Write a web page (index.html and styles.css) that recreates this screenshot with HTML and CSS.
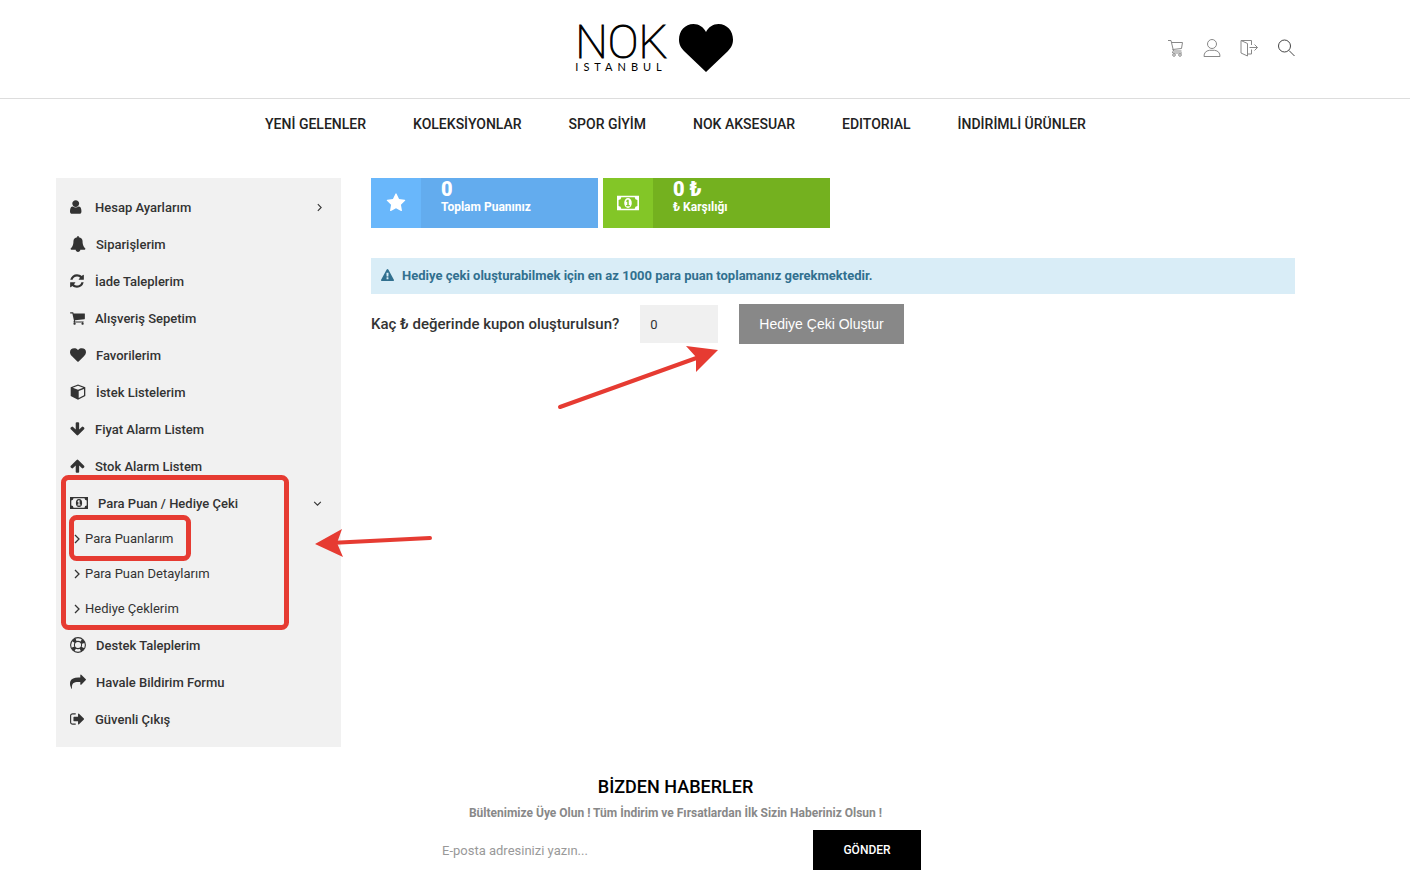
FILE: index.html
```html
<!DOCTYPE html>
<html lang="tr">
  <head>
    <title>Para Puanlarım • NOK İstanbul</title>
    <meta charset="UTF-8">
    <meta name="viewport" content="width=device-width, initial-scale=1.0">

    <!-- Style -->
    <link rel="stylesheet" href="styles.css">
  </head>
  <body>
    <!-- Icon sprite -->
    <svg class="sprite" aria-hidden="true">
      <symbol id="i-user" viewBox="256 0 1680 1792"><path d="M1536 1399q0 109-62.5 187t-150.5 78h-854q-88 0-150.5-78t-62.5-187q0-85 8.5-160.5t31.5-152 58.5-131 94-89 134.5-34.5q131 128 313 128t313-128q76 0 134.500 34.500t94 89 58.500 131 31.500 152 8.500 160.500zm-256-887q0 159-112.500 271.500t-271.500 112.500-271.500-112.500-112.500-271.500 112.500-271.500 271.500-112.500 271.500 112.500 112.500 271.500z"/></symbol>
      <symbol id="i-bell" viewBox="0 0 1792 1792"><path d="M1728 1408q0 52-38 90t-90 38h-448q0 106-75 181t-181 75-181-75-75-181h-448q-52 0-90-38t-38-90q50-42 91-88t85-119.500 74.500-158.500 50-206 19.500-260q0-152 117-282.500t307-158.500q-8-19-8-39 0-40 28-68t68-28 68 28 28 68q0 20-8 39 190 28 307 158.500t117 282.500q0 139 19.500 260t50 206 74.500 158.500 85 119.500 91 88z"/></symbol>
      <symbol id="i-refresh" viewBox="112 0 1680 1792"><path d="M1639 1056q0 5-1 7-64 268-268 434.500t-478 166.500q-146 0-282.500-55t-243.500-157l-129 129q-19 19-45 19t-45-19-19-45v-448q0-26 19-45t45-19h448q26 0 45 19t19 45-19 45l-137 137q71 66 161 102t187 36q134 0 250-65t186-179q11-17 53-117 8-23 30-23h192q13 0 22.500 9.500t9.500 22.500zm25-800v448q0 26-19 45t-45 19h-448q-26 0-45-19t-19-45 19-45l138-138q-148-137-349-137-134 0-250 65t-186 179q-11 17-53 117-8 23-30 23h-199q-13 0-22.500-9.500t-9.500-22.500v-7q65-268 270-434.500t480-166.500q146 0 284 55.500t245 156.500l130-129q19-19 45-19t45 19 19 45z"/></symbol>
      <symbol id="i-cart" viewBox="64 0 1680 1792"><path d="M704 1536q0 52-38 90t-90 38-90-38-38-90 38-90 90-38 90 38 38 90zm896 0q0 52-38 90t-90 38-90-38-38-90 38-90 90-38 90 38 38 90zm128-1088v512q0 24-16.500 42.500t-40.500 21.500l-1044 122q13 60 13 70 0 16-24 64h920q26 0 45 19t19 45-19 45-45 19h-1024q-26 0-45-19t-19-45q0-11 8-31.500t16-36 21.500-40 15.500-29.500l-177-823h-204q-26 0-45-19t-19-45 19-45 45-19h256q16 0 28.500 6.500t19.500 15.500 13 24.500 8 26 5.500 29.500 4.500 26h1201q26 0 45 19t19 45z"/></symbol>
      <symbol id="i-heart" viewBox="0 0 1792 1792"><path d="M896 1664q-26 0-44-18l-624-602q-10-8-27.500-26t-55.500-65.500-68-97.500-53.500-121-23.500-138q0-220 127-344t351-124q62 0 126.500 21.500t120 58 95.500 68.500 76 68q36-36 76-68t95.500-68.500 120-58 126.500-21.500q224 0 351 124t127 344q0 221-229 450l-623 600q-18 18-44 18z"/></symbol>
      <symbol id="i-cube" viewBox="0 0 16 16"><path d="M8 0.500 15.300 3.200V12L8 15.800 0.700 12V3.200z"/><path class="cut" d="M8 1.800 13.300 3.700 8 5.700 2.700 3.700zM8.700 7 14 5v6.300l-5.300 2.800z"/></symbol>
      <symbol id="i-down" viewBox="64 0 1680 1792"><path d="M1675 832q0 53-37 90l-651 652q-39 37-91 37-53 0-90-37l-651-652q-38-36-38-90 0-53 38-91l74-75q39-37 91-37 53 0 90 37l294 294v-704q0-52 38-90t90-38h128q52 0 90 38t38 90v704l294-294q37-37 90-37 52 0 91 37l75 75q37 39 37 91z"/></symbol>
      <symbol id="i-up" viewBox="64 0 1680 1792"><path transform="matrix(1 0 0 -1 0 1792)" d="M1675 832q0 53-37 90l-651 652q-39 37-91 37-53 0-90-37l-651-652q-38-36-38-90 0-53 38-91l74-75q39-37 91-37 53 0 90 37l294 294v-704q0-52 38-90t90-38h128q52 0 90 38t38 90v704l294-294q37-37 90-37 52 0 91 37l75 75q37 39 37 91z"/></symbol>
      <symbol id="i-money" viewBox="0 0 18 16"><path fill-rule="evenodd" d="M0 2h18v12H0zM3.500 3.300a2.300 2.300 0 0 1-2.200 2.200v5a2.300 2.300 0 0 1 2.200 2.200h11a2.300 2.300 0 0 1 2.200-2.200v-5a2.300 2.300 0 0 1-2.200-2.200z"/><ellipse cx="9" cy="8" rx="3.100" ry="4"/><path class="cut" d="M8.400 5.300h1.200v4.300h.9v1H7.500v-1h.9V6.900l-.8.300v-1z"/></symbol>
      <symbol id="i-ring" viewBox="0 0 16 16"><g fill="none" stroke="currentColor"><circle cx="8" cy="8" r="7.400" stroke-width="1.100"/><circle cx="8" cy="8" r="3.600" stroke-width="1.100"/><circle cx="8" cy="8" r="5.500" stroke-width="3.600" stroke-dasharray="3.400 5.240" stroke-dashoffset="-2.620"/></g></symbol>
      <symbol id="i-share" viewBox="0 0 1792 1792"><path d="M1792 640q0 26-19 45l-512 512q-19 19-45 19t-45-19-19-45v-256h-224q-98 0-175.500 6t-154 21.500-133 42.500-105.500 69.500-80 101-48.500 138.500-17.500 181q0 55 5 123 0 6 2.500 23.500t2.500 26.500q0 15-8.500 25t-23.500 10q-16 0-28-17-7-9-13-22t-13.500-30-10.500-24q-127-285-127-451 0-199 53-333 162-403 875-403h224v-256q0-26 19-45t45-19 45 19l512 512q19 19 19 45z"/></symbol>
      <symbol id="i-out" viewBox="60 0 1680 1792"><path d="M704 1440q0 4 1 20t.5 26.500-3 23.500-10 19.500-20.500 6.500h-320q-119 0-203.500-84.500t-84.500-203.500v-704q0-119 84.500-203.500t203.500-84.500h320q13 0 22.500 9.500t9.500 22.500q0 4 1 20t.5 26.500-3 23.500-10 19.500-20.500 6.500h-320q-66 0-113 47t-47 113v704q0 66 47 113t113 47h312l11.500 1 11.500 3 8 5.500 7 9 2 13.500zm928-544q0 26-19 45l-544 544q-19 19-45 19t-45-19-19-45v-288h-448q-26 0-45-19t-19-45v-384q0-26 19-45t45-19h448v-288q0-26 19-45t45-19 45 19l544 544q19 19 19 45z"/></symbol>
      <symbol id="i-star" viewBox="0 0 1792 1792"><path d="M1728 647q0 22-26 48l-363 354 86 500q1 7 1 20 0 21-10.500 35.500t-30.500 14.500q-19 0-40-12l-449-236-449 236q-22 12-40 12-21 0-31.500-14.500t-10.500-35.500q0-6 2-20l86-500-364-354q-25-27-25-48 0-37 56-46l502-73 225-455q19-41 49-41t49 41l225 455 502 73q56 9 56 46z"/></symbol>
      <symbol id="i-warning" viewBox="0 0 1792 1792"><path d="M1024 1375v-190q0-14-9.500-23.500t-22.500-9.500h-192q-13 0-22.500 9.500t-9.500 23.500v190q0 14 9.500 23.500t22.500 9.500h192q13 0 22.500-9.500t9.500-23.500zm-2-374l18-459q0-12-10-19-13-11-24-11h-220q-11 0-24 11-10 7-10 21l17 457q0 10 10 16.500t24 6.500h185q14 0 23.500-6.500t10.500-16.500zm-14-934l768 1408q35 63-2 126-17 29-46.500 46t-63.500 17h-1536q-34 0-63.500-17t-46.500-46q-37-63-2-126l768-1408q17-31 47-49t65-18 65 18 47 49z"/></symbol>
      <symbol id="i-angle" viewBox="0 0 6 10"><path d="M1 1l4 4-4 4" fill="none" stroke="currentColor" stroke-width="1.300"/></symbol>
      <symbol id="i-angle-down" viewBox="0 0 10 6"><path d="M1 1l4 4 4-4" fill="none" stroke="currentColor" stroke-width="1.300"/></symbol>
    </svg>

    <header>
      <a class="logo" href="#">
        <span class="logo-text">
          <span class="logo-name">NOK</span>
          <span class="logo-city">ISTANBUL</span>
        </span>
        <svg class="logo-heart" viewBox="0 0 54 48" aria-hidden="true"><path d="M27 48 5.500 27.500C1.500 23.500 0 20 0 15.500 0 7 6 0 14.500 0 20 0 24.500 3 27 8 29.500 3 34 0 39.500 0 48 0 54 7 54 15.500c0 4.500-1.500 8-5.500 12z"/></svg>
      </a>
      <div class="tools">
        <a href="#" title="Sepet"><svg class="tool" viewBox="0 0 18 18"><path d="M2 1.500h3l2.500 10.500h8M5.500 3.500h11l-1 6-9 1M7.500 12q-1.500.5-.8 2h9.300"/><circle cx="8" cy="16" r="1.300"/><circle cx="14" cy="16" r="1.300"/></svg></a>
        <a href="#" title="Hesabım"><svg class="tool" viewBox="0 0 18 18"><circle cx="9" cy="5" r="4.500"/><path d="M1 17.500q0-5.500 5.500-6.200h5q5.500.7 5.500 6.200z"/></svg></a>
        <a href="#" title="Çıkış"><svg class="tool" viewBox="0 0 18 18"><path d="M1 1.500h10.500V6M11.500 10.500v4.500H8M1 1.500V14l6.500 3V4.500L1 1.500M9.500 8.500h8M14.500 5.500l3 3-3 3"/></svg></a>
        <a href="#" title="Ara"><svg class="tool dark" viewBox="0 0 18 18"><circle cx="7.500" cy="7" r="6"/><path d="M12 11.500l5.500 5.500"/></svg></a>
      </div>
    </header>

    <nav>
      <a href="#">YENİ GELENLER</a>
      <a href="#">KOLEKSİYONLAR</a>
      <a href="#">SPOR GİYİM</a>
      <a href="#">NOK AKSESUAR</a>
      <a href="#">EDITORIAL</a>
      <a href="#">İNDİRİMLİ ÜRÜNLER</a>
    </nav>

    <main>
      <aside>
        <ul class="menu">
          <li><a href="#"><svg class="icon"><use href="#i-user"/></svg>Hesap Ayarlarım<svg class="angle"><use href="#i-angle"/></svg></a></li>
          <li><a href="#"><svg class="icon wide"><use href="#i-bell"/></svg>Siparişlerim</a></li>
          <li><a href="#"><svg class="icon"><use href="#i-refresh"/></svg>İade Taleplerim</a></li>
          <li><a href="#"><svg class="icon"><use href="#i-cart"/></svg>Alışveriş Sepetim</a></li>
          <li><a href="#"><svg class="icon wide"><use href="#i-heart"/></svg>Favorilerim</a></li>
          <li><a href="#"><svg class="icon wide"><use href="#i-cube"/></svg>İstek Listelerim</a></li>
          <li><a href="#"><svg class="icon"><use href="#i-down"/></svg>Fiyat Alarm Listem</a></li>
          <li><a href="#"><svg class="icon"><use href="#i-up"/></svg>Stok Alarm Listem</a></li>
          <li>
            <a href="#"><svg class="icon money"><use href="#i-money"/></svg>Para Puan / Hediye Çeki<svg class="angle down"><use href="#i-angle-down"/></svg></a>
            <ul class="submenu">
              <li><a href="#"><svg class="angle"><use href="#i-angle"/></svg>Para Puanlarım</a></li>
              <li><a href="#"><svg class="angle"><use href="#i-angle"/></svg>Para Puan Detaylarım</a></li>
              <li><a href="#"><svg class="angle"><use href="#i-angle"/></svg>Hediye Çeklerim</a></li>
            </ul>
          </li>
          <li><a href="#"><svg class="icon wide"><use href="#i-ring"/></svg>Destek Taleplerim</a></li>
          <li><a href="#"><svg class="icon wide"><use href="#i-share"/></svg>Havale Bildirim Formu</a></li>
          <li><a href="#"><svg class="icon"><use href="#i-out"/></svg>Güvenli Çıkış</a></li>
        </ul>
      </aside>

      <section class="content">
        <div class="tiles">
          <div class="tile blue">
            <div class="tile-icon"><svg><use href="#i-star"/></svg></div>
            <div class="tile-text"><strong>0</strong><span>Toplam Puanınız</span></div>
          </div>
          <div class="tile green">
            <div class="tile-icon"><svg><use href="#i-money"/></svg></div>
            <div class="tile-text"><strong>0 ₺</strong><span>₺ Karşılığı</span></div>
          </div>
        </div>
        <p class="alert"><svg><use href="#i-warning"/></svg>Hediye çeki oluşturabilmek için en az 1000 para puan toplamanız gerekmektedir.</p>
        <form class="coupon">
          <label for="coupon-amount">Kaç ₺ değerinde kupon oluşturulsun?</label>
          <input id="coupon-amount" type="text" value="0">
          <button type="button">Hediye Çeki Oluştur</button>
        </form>
      </section>
    </main>

    <footer>
      <h2>BİZDEN HABERLER</h2>
      <p>Bültenimize Üye Olun ! Tüm İndirim ve Fırsatlardan İlk Sizin Haberiniz Olsun !</p>
      <form class="newsletter">
        <input type="email" placeholder="E-posta adresinizi yazın..." aria-label="E-posta adresi">
        <button type="button">GÖNDER</button>
      </form>
    </footer>

    <!-- Help marks over the page -->
    <svg class="marks" viewBox="0 0 440 640" aria-hidden="true">
      <rect x="63.500" y="477.500" width="223" height="150" rx="5"/>
      <rect x="71.500" y="517.500" width="117" height="41" rx="5"/>
      <path class="line" d="M430 538 330 543"/>
      <path class="head" d="M315 544 342 529 337 543 343 557z"/>
      <path class="line" d="M560 407 702 356"/>
      <path class="head" d="M718 350 686 346 696 357 696 372z"/>
    </svg>
  </body>
</html>
```
FILE: styles.css
```css
* {
  box-sizing: border-box;
}
html, body {
  margin: 0;
}
body {
  position: relative;
  background: white;
  color: #333;
  font-family: Roboto, sans-serif;
  font-size: 13px;
}
a {
  color: inherit;
  text-decoration: none;
}
ul {
  list-style: none;
  margin: 0;
  padding: 0;
}
svg {
  fill: currentColor;
  flex-shrink: 0;
}
input, button {
  border: 0;
  border-radius: 0;
  font-family: inherit;
}
.sprite {
  position: absolute;
  width: 0;
  height: 0;
}

/* Header */
header, nav, main, footer {
  padding: 0 115px 0 56px;
}
header {
  display: grid;
  grid-template-columns: 1fr auto 1fr;
  align-items: center;
  height: 99px;
  padding-bottom: 3px;
  border-bottom: 1px solid #ddd;
}
.logo {
  grid-column: 2;
  display: flex;
  align-items: center;
  gap: 11px;
  margin-right: 43px;
  color: black;
}
.logo-text {
  display: flex;
  flex-direction: column;
  font-weight: 100;
}
.logo-name {
  font-size: 46px;
  line-height: 38px;
  -webkit-text-stroke: 1px black;
}
.logo-city {
  font-family: Lato, sans-serif;
  font-weight: 400;
  font-size: 11px;
  line-height: 12px;
  letter-spacing: 5px;
  margin-right: -5px;
}
.logo-heart {
  width: 54px;
  height: 48px;
}
.tools {
  display: flex;
  justify-content: flex-end;
  gap: 19px;
}
.tool {
  display: block;
  width: 18px;
  height: 18px;
  fill: none;
  stroke: #888;
}
.tool.dark {
  stroke: #444;
}

/* Main navigation */
nav {
  display: flex;
  justify-content: center;
  gap: 47px;
  color: #222;
  font-size: 14px;
  font-weight: 500;
  line-height: 50px;
}

/* Account menu */
main {
  display: flex;
  align-items: flex-start;
  gap: 30px;
  margin-top: 29px;
}
aside {
  width: 285px;
  flex-shrink: 0;
  padding: 11px 0 9px;
  background: #f1f1f1;
}
.menu {
  font-weight: 500;
}
.menu a {
  display: flex;
  align-items: center;
  gap: 10px;
  height: 37px;
  padding: 0 19px 0 14px;
}
.icon {
  width: 15px;
  height: 16px;
  margin-bottom: 2px;
}
.icon.wide {
  width: 16px;
}
.icon.money {
  width: 18px;
}
.cut {
  fill: var(--cut, #f1f1f1);
}
.angle {
  width: 5px;
  height: 9px;
  margin-left: auto;
}
.angle.down {
  width: 9px;
  height: 5px;
}
.submenu {
  font-weight: 400;
}
.submenu a {
  height: 35px;
  gap: 5px;
  padding-bottom: 2px;
  padding-left: 18px;
}
.submenu .angle {
  width: 6px;
  height: 10px;
  margin-left: 0;
}

/* Content */
.content {
  flex-grow: 1;
}
.tiles {
  display: flex;
  gap: 5px;
}
.tile {
  display: flex;
  width: 227px;
  height: 50px;
  color: white;
}
.tile-icon {
  display: flex;
  align-items: center;
  justify-content: center;
  width: 50px;
}
.tile-icon svg {
  width: 22px;
  height: 20px;
}
.tile-text {
  display: flex;
  flex-direction: column;
  padding: 1px 20px;
  font-size: 12px;
  font-weight: 700;
}
.tile-text strong {
  font-size: 20px;
  line-height: 20px;
}
.tile-text span {
  line-height: 16px;
}
.blue {
  background: #63acee;
}
.blue .tile-icon {
  background: #69b7fb;
}
.green {
  --cut: #83c627;
  background: #74b11f;
}
.green .tile-icon {
  background: #83c627;
}
.alert {
  display: flex;
  align-items: center;
  gap: 8px;
  height: 36px;
  margin: 30px 0 10px;
  padding: 0 10px 2px;
  background: #d9edf7;
  color: #31708f;
  font-weight: 700;
}
.alert svg {
  width: 13px;
  height: 13px;
}
.coupon {
  display: flex;
  align-items: center;
}
.coupon label {
  font-size: 15px;
  font-weight: 500;
}
.coupon input {
  width: 78px;
  height: 38px;
  margin: 0 21px;
  padding: 0 10px;
  background: #f0f0f0;
  color: #333;
  font-size: 13px;
}
.coupon button {
  height: 40px;
  padding: 0 20px;
  background: #888;
  color: white;
  font-family: "Liberation Sans", Arial, sans-serif;
  font-size: 14px;
}

/* Newsletter */
footer {
  display: flex;
  flex-direction: column;
  align-items: center;
  margin-top: 29px;
}
footer h2 {
  margin: 0;
  color: black;
  font-size: 18px;
  font-weight: 500;
  line-height: 22px;
}
footer p {
  margin: 7px 0 9px;
  color: #888;
  font-size: 12px;
  font-weight: 700;
  line-height: 16px;
}
.newsletter {
  display: flex;
  width: 100%;
  max-width: 491px;
}
.newsletter input {
  flex-grow: 1;
  padding: 0 12px;
  font-size: 13px;
}
.newsletter input::placeholder {
  color: #999;
}
.newsletter button {
  min-width: 108px;
  height: 40px;
  background: black;
  color: white;
  font-size: 12px;
  font-weight: 500;
}

/* Help marks */
.marks {
  position: absolute;
  top: 0;
  left: 0;
  width: 440px;
  height: 640px;
  overflow: visible;
  pointer-events: none;
  color: #e63b32;
}
.marks rect, .marks .line {
  fill: none;
  stroke: currentColor;
  stroke-width: 5;
}
.marks .line {
  stroke-width: 4;
  stroke-linecap: round;
}
```
